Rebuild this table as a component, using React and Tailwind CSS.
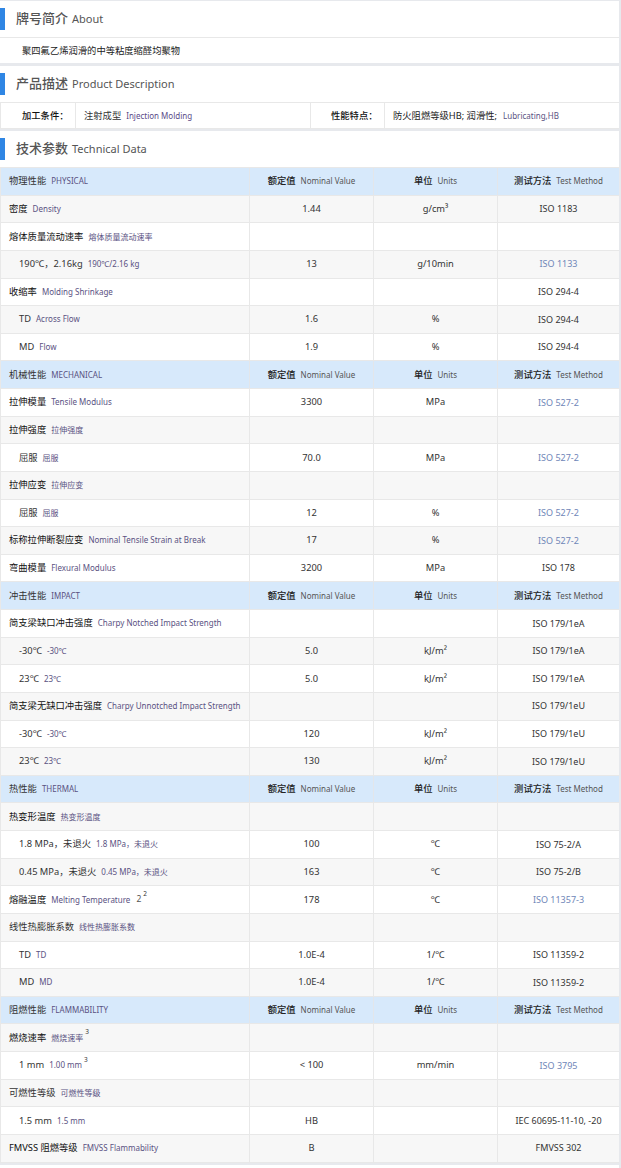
const rows = [
  { h: ['物理性能', 'PHYSICAL'] },
  { l: '密度', s: 'Density', v: '1.44', u: 'g/cm³', m: 'ISO 1183' },
  { l: '熔体质量流动速率', s: '熔体质量流动速率' },
  { l: '190℃，2.16kg', s: '190℃/2.16 kg', v: '13', u: 'g/10min', m: 'ISO 1133', link: true, i: true },
  { l: '收缩率', s: 'Molding Shrinkage', m: 'ISO 294-4' },
  { l: 'TD', s: 'Across Flow', v: '1.6', u: '%', m: 'ISO 294-4', i: true },
  { l: 'MD', s: 'Flow', v: '1.9', u: '%', m: 'ISO 294-4', i: true },
  { h: ['机械性能', 'MECHANICAL'] },
  { l: '拉伸模量', s: 'Tensile Modulus', v: '3300', u: 'MPa', m: 'ISO 527-2', link: true },
  { l: '拉伸强度', s: '拉伸强度' },
  { l: '屈服', s: '屈服', v: '70.0', u: 'MPa', m: 'ISO 527-2', link: true, i: true },
  { l: '拉伸应变', s: '拉伸应变' },
  { l: '屈服', s: '屈服', v: '12', u: '%', m: 'ISO 527-2', link: true, i: true },
  { l: '标称拉伸断裂应变', s: 'Nominal Tensile Strain at Break', v: '17', u: '%', m: 'ISO 527-2', link: true },
  { l: '弯曲模量', s: 'Flexural Modulus', v: '3200', u: 'MPa', m: 'ISO 178' },
  { h: ['冲击性能', 'IMPACT'] },
  { l: '简支梁缺口冲击强度', s: 'Charpy Notched Impact Strength', m: 'ISO 179/1eA' },
  { l: '-30℃', s: '-30℃', v: '5.0', u: 'kJ/m²', m: 'ISO 179/1eA', i: true },
  { l: '23℃', s: '23℃', v: '5.0', u: 'kJ/m²', m: 'ISO 179/1eA', i: true },
  { l: '简支梁无缺口冲击强度', s: 'Charpy Unnotched Impact Strength', m: 'ISO 179/1eU' },
  { l: '-30℃', s: '-30℃', v: '120', u: 'kJ/m²', m: 'ISO 179/1eU', i: true },
  { l: '23℃', s: '23℃', v: '130', u: 'kJ/m²', m: 'ISO 179/1eU', i: true },
  { h: ['热性能', 'THERMAL'] },
  { l: '热变形温度', s: '热变形温度' },
  { l: '1.8 MPa，未退火', s: '1.8 MPa，未退火', v: '100', u: '℃', m: 'ISO 75-2/A', i: true },
  { l: '0.45 MPa，未退火', s: '0.45 MPa，未退火', v: '163', u: '℃', m: 'ISO 75-2/B', i: true },
  { l: '熔融温度', s: 'Melting Temperature', sup2: '2', v: '178', u: '℃', m: 'ISO 11357-3', link: true },
  { l: '线性热膨胀系数', s: '线性热膨胀系数', light: true },
  { l: 'TD', s: 'TD', v: '1.0E-4', u: '1/℃', m: 'ISO 11359-2', i: true },
  { l: 'MD', s: 'MD', v: '1.0E-4', u: '1/℃', m: 'ISO 11359-2', i: true },
  { h: ['阻燃性能', 'FLAMMABILITY'] },
  { l: '燃烧速率', s: '燃烧速率', sup: '3' },
  { l: '1 mm', s: '1.00 mm', sup: '3', v: '< 100', u: 'mm/min', m: 'ISO 3795', link: true, i: true },
  { l: '可燃性等级', s: '可燃性等级', light: true },
  { l: '1.5 mm', s: '1.5 mm', v: 'HB', m: 'IEC 60695-11-10, -20', i: true },
  { l: 'FMVSS 阻燃等级', s: 'FMVSS Flammability', v: 'B', m: 'FMVSS 302' },
];

function SectionTitle({ cn, en }) {
  return (
    <div className="flex h-[37px] items-center border-b border-[#e8e8e8] bg-white">
      <div className="h-[22px] w-[5px] bg-[#2f86e4]" />
      <span className="ml-[11px] text-[13px] font-medium text-[#555]">{cn}</span>
      <span className="ml-[4px] text-[11px] text-[#555]">{en}</span>
    </div>
  );
}

function HeadCell({ cn, en }) {
  return (
    <div className="flex items-center justify-center border-r border-[#e3e6ea]">
      <span className="text-[9.3px] font-medium text-[#222]">{cn}</span>
      <span className="ml-[5px] text-[8px] text-[#555]">{en}</span>
    </div>
  );
}

function Row({ r, idx }) {
  const grid = 'grid h-[27.64px] grid-cols-[249px_124px_124px_1fr] border-b border-[#e8e8e8]';
  if (r.h) {
    return (
      <div className={`${grid} bg-[#d7e9fb]`}>
        <div className="flex items-center border-r border-[#e3e6ea] pl-[8px]">
          <span className="text-[9.3px] text-[#333]">{r.h[0]}</span>
          <span className="ml-[5px] text-[8px] text-[#5a5282]">{r.h[1]}</span>
        </div>
        <HeadCell cn="额定值" en="Nominal Value" />
        <HeadCell cn="单位" en="Units" />
        <div className="flex items-center justify-center">
          <span className="text-[9.3px] font-medium text-[#222]">测试方法</span>
          <span className="ml-[5px] text-[8px] text-[#555]">Test Method</span>
        </div>
      </div>
    );
  }
  const bg = idx % 2 === 1 ? 'bg-[#f7f7f7]' : 'bg-white';
  return (
    <div className={`${grid} ${bg}`}>
      <div className={`flex items-center border-r border-[#e8e8e8] ${r.i ? 'pl-[18px]' : 'pl-[8px]'}`}>
        <span className={`text-[9.3px] ${r.i || r.light ? 'text-[#333]' : 'text-[#111]'}`}>{r.l}</span>
        <span className="ml-[5px] text-[8px] text-[#5a5282]">{r.s}</span>
        {r.sup2 && <span className="ml-[6px] text-[8.5px] text-[#555]">{r.sup2}</span>}
        {(r.sup || r.sup2) && (
          <sup className="ml-[2px] -translate-y-[2px] text-[6.5px] text-[#333]">{r.sup || r.sup2}</sup>
        )}
      </div>
      <div className="flex items-center justify-center border-r border-[#e8e8e8] text-[9.3px] text-[#333]">{r.v}</div>
      <div className="flex items-center justify-center border-r border-[#e8e8e8] text-[9.3px] text-[#333]">{r.u}</div>
      <div className={`flex items-center justify-center text-[9px] ${r.link ? 'text-[#6f86b8]' : 'text-[#333]'}`}>
        {r.m}
      </div>
    </div>
  );
}

export default function App() {
  return (
    <div className="min-h-[1168px] w-[621px] bg-[#e7e9ed] pr-[2px] pt-px font-['Noto_Sans','Noto_Sans_CJK_SC',sans-serif]">
      <SectionTitle cn="牌号简介" en="About" />
      <div className="flex h-[25px] items-center bg-white pl-[22px] text-[9.3px] text-[#222]">
        聚四氟乙烯润滑的中等粘度缩醛均聚物
      </div>

      <div className="mt-[3px]">
        <SectionTitle cn="产品描述" en="Product Description" />
        <div className="flex h-[26px] border-b border-[#e8e8e8] bg-white text-[9.3px]">
          <div className="flex w-[76px] items-center border-r border-l border-[#e8e8e8] pl-[21px] font-medium text-[#111]">
            加工条件：
          </div>
          <div className="flex w-[235px] items-center border-r border-[#e8e8e8] pl-[8px] text-[#333]">
            注射成型
            <span className="ml-[5px] text-[8px] text-[#5a4a88]">Injection Molding</span>
          </div>
          <div className="flex w-[74px] items-center border-r border-[#e8e8e8] pl-[20px] font-medium text-[#111]">
            性能特点：
          </div>
          <div className="flex flex-1 items-center pl-[8px] text-[#222]">
            防火阻燃等级HB; 润滑性;
            <span className="ml-[6px] text-[8px] text-[#5a5282]">Lubricating,HB</span>
          </div>
        </div>
      </div>

      <div className="mt-[2px]">
        <SectionTitle cn="技术参数" en="Technical Data" />
        <div className="border-l border-[#e8e8e8]">
          {rows.map((r, idx) => (
            <Row key={idx} r={r} idx={idx} />
          ))}
        </div>
      </div>

      <div className="mt-[2px] h-[4px] bg-white" />
    </div>
  );
}
